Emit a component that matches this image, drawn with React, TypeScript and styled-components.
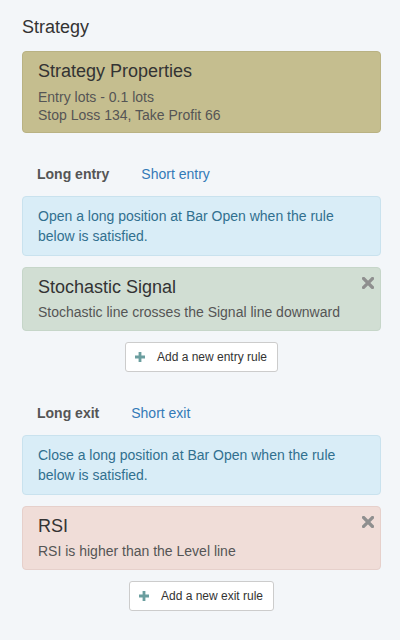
import React from 'react';
import styled, { createGlobalStyle } from 'styled-components';

const GlobalStyle = createGlobalStyle`
  html, body {
    margin: 0;
    padding: 0;
    background: #f3f6f9;
  }
  body {
    font-family: 'Liberation Sans', Arial, sans-serif;
    font-size: 14px;
    color: #333;
  }
`;

// page layout

const Page = styled.div`
  padding: 17px 19px 20px 22px;
  display: flex;
  flex-direction: column;
`;

const Title = styled.h2`
  margin: 0 0 14px;
  font-size: 18px;
  font-weight: 400;
  line-height: 20px;
  color: #333;
`;

// panels

const Panel = styled.div<{ bg: string; border: string }>`
  position: relative;
  background: ${(p) => p.bg};
  border: 1px solid ${(p) => p.border};
  border-radius: 4px;
  padding: 9px 15px 8px;
`;

const PanelHeading = styled.h3<{ gap?: number }>`
  margin: 0 0 ${(p) => p.gap ?? 5}px;
  font-size: 18px;
  font-weight: 400;
  line-height: 20px;
  color: #333;
`;

const PanelText = styled.div<{ lh?: number }>`
  font-size: 14px;
  line-height: ${(p) => p.lh ?? 20}px;
  color: #555;
`;

const Remove = styled.button`
  position: absolute;
  top: 8px;
  right: 5px;
  width: 14px;
  height: 14px;
  padding: 0;
  border: none;
  background: none;
  display: flex;
  align-items: center;
  justify-content: center;
  cursor: pointer;
`;

// tabs

const Tabs = styled.ul`
  list-style: none;
  margin: 21px 0 2px;
  padding: 0;
  display: flex;
`;

const Tab = styled.li<{ active?: boolean }>`
  padding: 10px 15px;
  margin-right: 2px;
  line-height: 20px;
  font-size: 14px;
  font-weight: ${(p) => (p.active ? 700 : 400)};
  color: ${(p) => (p.active ? '#555' : '#337ab7')};
  cursor: pointer;
`;

const Info = styled.div`
  background: #d9edf7;
  border: 1px solid #c9e2ee;
  border-radius: 4px;
  padding: 9px 15px 9px;
  line-height: 20px;
  font-size: 14px;
  color: #31708f;
  margin-bottom: 11px;
`;

// add-rule button

const ButtonRow = styled.div`
  display: flex;
  justify-content: center;
  margin-top: 11px;
`;

const AddButton = styled.button`
  display: flex;
  align-items: center;
  gap: 12px;
  height: 30px;
  padding: 0 10px 0 9px;
  background: #fff;
  border: 1px solid #ccc;
  border-radius: 3px;
  font-family: 'Liberation Sans', Arial, sans-serif;
  font-size: 12px;
  color: #333;
  cursor: pointer;
`;

const Plus = () => (
  <svg width='10' height='10' viewBox='0 0 10 10'>
    <path d='M3.6 0h2.8v3.6H10v2.8H6.4V10H3.6V6.4H0V3.6h3.6z' fill='#6b9e9f' />
  </svg>
);

const Cross = () => (
  <svg width='12' height='12' viewBox='0 0 12 12'>
    <path
      d='M1.5 1.5L10.5 10.5M10.5 1.5L1.5 10.5'
      stroke='#8f8f8f'
      strokeWidth='3.2'
      strokeLinecap='square'
    />
  </svg>
);

type Section = {
  tabs: [string, string];
  info: string;
  rule: { name: string; text: string; bg: string; border: string };
  button: string;
};

const sections: Section[] = [
  {
    tabs: ['Long entry', 'Short entry'],
    info: 'Open a long position at Bar Open when the rule below is satisfied.',
    rule: {
      name: 'Stochastic Signal',
      text: 'Stochastic line crosses the Signal line downward',
      bg: '#d1ded3',
      border: '#c6d6c9',
    },
    button: 'Add a new entry rule',
  },
  {
    tabs: ['Long exit', 'Short exit'],
    info: 'Close a long position at Bar Open when the rule below is satisfied.',
    rule: {
      name: 'RSI',
      text: 'RSI is higher than the Level line',
      bg: '#f0ddd8',
      border: '#e6d0cb',
    },
    button: 'Add a new exit rule',
  },
];

export default function App() {
  return (
    <>
      <GlobalStyle />
      <Page>
        <Title>Strategy</Title>
        <Panel bg='#c5be8f' border='#b9b283'>
          <PanelHeading gap={7}>Strategy Properties</PanelHeading>
          <PanelText lh={18}>Entry lots - 0.1 lots</PanelText>
          <PanelText lh={18}>Stop Loss 134, Take Profit 66</PanelText>
        </Panel>

        {sections.map((s) => (
          <React.Fragment key={s.button}>
            <Tabs>
              <Tab active>{s.tabs[0]}</Tab>
              <Tab>{s.tabs[1]}</Tab>
            </Tabs>
            <Info>{s.info}</Info>
            <Panel bg={s.rule.bg} border={s.rule.border}>
              <PanelHeading>{s.rule.name}</PanelHeading>
              <PanelText>{s.rule.text}</PanelText>
              <Remove aria-label='remove'>
                <Cross />
              </Remove>
            </Panel>
            <ButtonRow>
              <AddButton>
                <Plus />
                {s.button}
              </AddButton>
            </ButtonRow>
          </React.Fragment>
        ))}
      </Page>
    </>
  );
}
